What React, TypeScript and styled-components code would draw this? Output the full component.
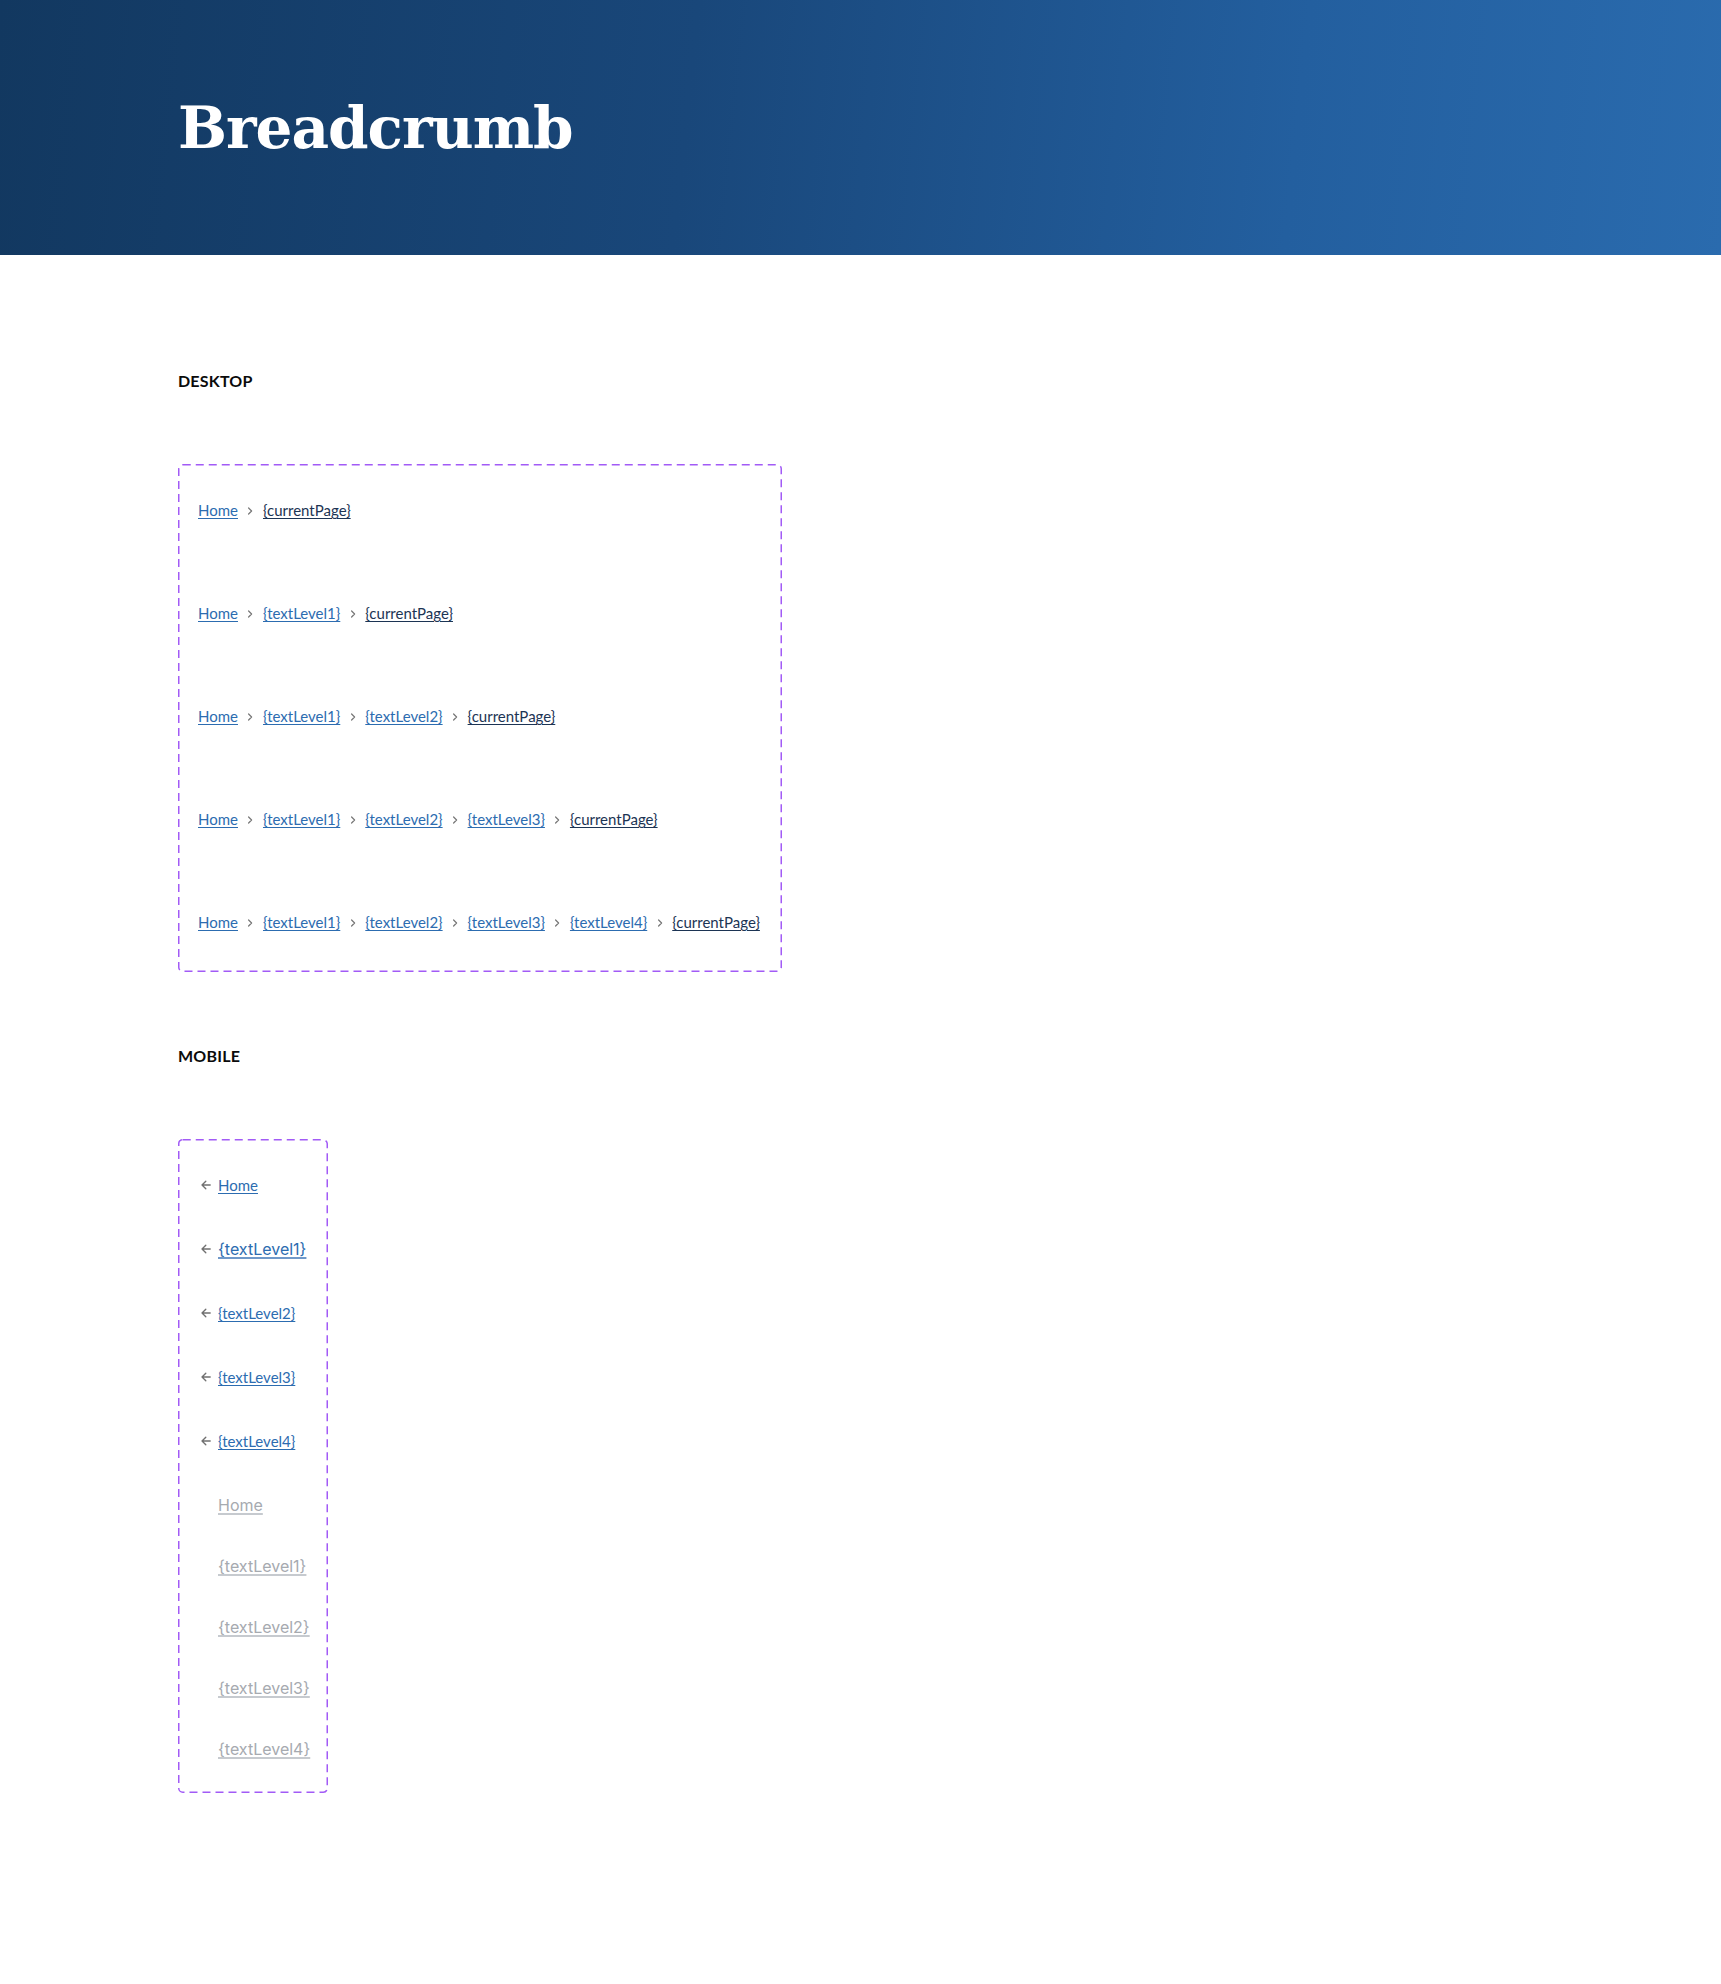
import React from "react";
import styled, { createGlobalStyle } from "styled-components";

const GlobalStyle = createGlobalStyle`
  body {
    margin: 0;
    background: #ffffff;
    font-family: Lato, "Liberation Sans", sans-serif;
    color: #111111;
  }
`;

const Header = styled.header`
  height: 255px;
  display: flex;
  align-items: center;
  padding: 0 178px;
  background: linear-gradient(96deg, #123860 0%, #19477a 40%, #235f9f 75%, #2a6bae 100%);
`;

const Title = styled.h1`
  margin: 0;
  font-family: "DejaVu Serif", "Liberation Serif", serif;
  font-weight: 700;
  font-size: 58px;
  line-height: 1;
  letter-spacing: -1px;
  color: #ffffff;
`;

const Main = styled.main`
  padding: 114px 178px 190px;
  display: flex;
  flex-direction: column;
  gap: 72px;
`;

const Section = styled.section`
  display: flex;
  flex-direction: column;
  align-items: flex-start;
`;

const SectionLabel = styled.h2`
  margin: 0 0 71px;
  font-size: 16px;
  line-height: 24px;
  font-weight: 700;
  letter-spacing: 0.2px;
  color: #0b0b0b;
`;

const Frame = styled.div<{ $width: number }>`
  position: relative;
  box-sizing: border-box;
  width: ${({ $width }) => $width}px;
  display: flex;
  flex-direction: column;
`;

const Outline = styled.svg`
  position: absolute;
  inset: 0;
  width: 100%;
  height: 100%;
  overflow: visible;
  pointer-events: none;
`;

const DashedOutline = () => (
  <Outline aria-hidden="true">
    <rect
      x="0.75"
      y="0.75"
      width="calc(100% - 1.5px)"
      height="calc(100% - 1.5px)"
      rx="4"
      fill="none"
      stroke="#a25bf6"
      strokeWidth="1.5"
      strokeDasharray="8 5"
    />
  </Outline>
);

const DesktopList = styled.div`
  display: flex;
  flex-direction: column;
  gap: 79px;
  padding: 34px 20px 38px;
`;

const Trail = styled.ol`
  display: flex;
  align-items: center;
  height: 24px;
  margin: 0;
  padding: 0;
  list-style: none;
  white-space: nowrap;
`;

const Step = styled.li`
  display: flex;
  align-items: center;
`;

const Crumb = styled.a<{ $current?: boolean }>`
  font-size: 15px;
  line-height: 24px;
  color: ${({ $current }) => ($current ? "#1c3454" : "#2c6cb0")};
  text-decoration: underline;
  text-decoration-thickness: 1px;
  text-underline-offset: 2px;
  cursor: pointer;
`;

const ChevronIcon = styled.svg`
  width: 6px;
  height: 8px;
  margin: 2px 9.5px 0;
  flex: none;
`;

const Chevron = () => (
  <ChevronIcon viewBox="0 0 6 8" aria-hidden="true">
    <path d="M1.6 1 L4.6 4 L1.6 7" fill="none" stroke="#777777" strokeWidth="1.2" strokeLinecap="round" strokeLinejoin="round" />
  </ChevronIcon>
);

const MobileList = styled.div`
  display: flex;
  flex-direction: column;
  padding: 34px 18px 32px 23px;
`;

const MobileGroup = styled.div<{ $gap: number }>`
  display: flex;
  flex-direction: column;
  gap: ${({ $gap }) => $gap}px;
  & + & {
    margin-top: 40px;
  }
`;

const BackRow = styled.div<{ $indent?: boolean }>`
  display: flex;
  align-items: center;
  gap: 7px;
  height: 24px;
  padding-left: ${({ $indent }) => ($indent ? "17px" : "0")};
  white-space: nowrap;
`;

const ArrowIcon = styled.svg`
  width: 10px;
  height: 10px;
  flex: none;
`;

const BackArrow = () => (
  <ArrowIcon viewBox="0 0 10 10" aria-hidden="true">
    <path d="M9.2 5 H1 M4.8 1.2 L1 5 L4.8 8.8" fill="none" stroke="#707070" strokeWidth="1.35" strokeLinecap="round" strokeLinejoin="round" />
  </ArrowIcon>
);

const MobileLink = styled.a<{ $variant?: "wide" | "muted" }>`
  font-family: ${({ $variant }) => ($variant ? "Inter, \"Liberation Sans\", sans-serif" : "Lato, \"Liberation Sans\", sans-serif")};
  font-size: ${({ $variant }) => ($variant ? "16px" : "15px")};
  line-height: 24px;
  color: ${({ $variant }) => ($variant === "muted" ? "#a6aab0" : "#2c6cb0")};
  text-decoration: underline;
  text-decoration-thickness: ${({ $variant }) => ($variant ? "2px" : "1px")};
  text-decoration-color: ${({ $variant }) =>
    $variant === "muted" ? "#c6cacf" : $variant === "wide" ? "#6f98c9" : "currentColor"};
  text-underline-offset: 2px;
  cursor: pointer;
`;

const levels = ["{textLevel1}", "{textLevel2}", "{textLevel3}", "{textLevel4}"];

const trails = [0, 1, 2, 3, 4].map((depth) => ["Home", ...levels.slice(0, depth), "{currentPage}"]);

const BreadcrumbTrail = ({ items }: { items: string[] }) => (
  <Trail>
    {items.map((label, index) => {
      const isLast = index === items.length - 1;
      return (
        <Step key={label}>
          {index > 0 && <Chevron />}
          <Crumb $current={isLast} aria-current={isLast ? "page" : undefined}>
            {label}
          </Crumb>
        </Step>
      );
    })}
  </Trail>
);

const mobileItems = ["Home", ...levels];

const App = () => {
  return (
    <>
      <GlobalStyle />
      <Header>
        <Title>Breadcrumb</Title>
      </Header>
      <Main>
        <Section>
          <SectionLabel>DESKTOP</SectionLabel>
          <Frame $width={604}>
            <DashedOutline />
            <DesktopList>
              {trails.map((items, i) => (
                <BreadcrumbTrail key={i} items={items} />
              ))}
            </DesktopList>
          </Frame>
        </Section>

        <Section>
          <SectionLabel>MOBILE</SectionLabel>
          <Frame $width={150}>
            <DashedOutline />
            <MobileList>
              <MobileGroup $gap={40}>
                {mobileItems.map((label, i) => (
                  <BackRow key={label}>
                    <BackArrow />
                    <MobileLink $variant={i === 1 ? "wide" : undefined}>{label}</MobileLink>
                  </BackRow>
                ))}
              </MobileGroup>
              <MobileGroup $gap={37}>
                {mobileItems.map((label) => (
                  <BackRow key={label} $indent>
                    <MobileLink $variant="muted">{label}</MobileLink>
                  </BackRow>
                ))}
              </MobileGroup>
            </MobileList>
          </Frame>
        </Section>
      </Main>
    </>
  );
};

export default App;
